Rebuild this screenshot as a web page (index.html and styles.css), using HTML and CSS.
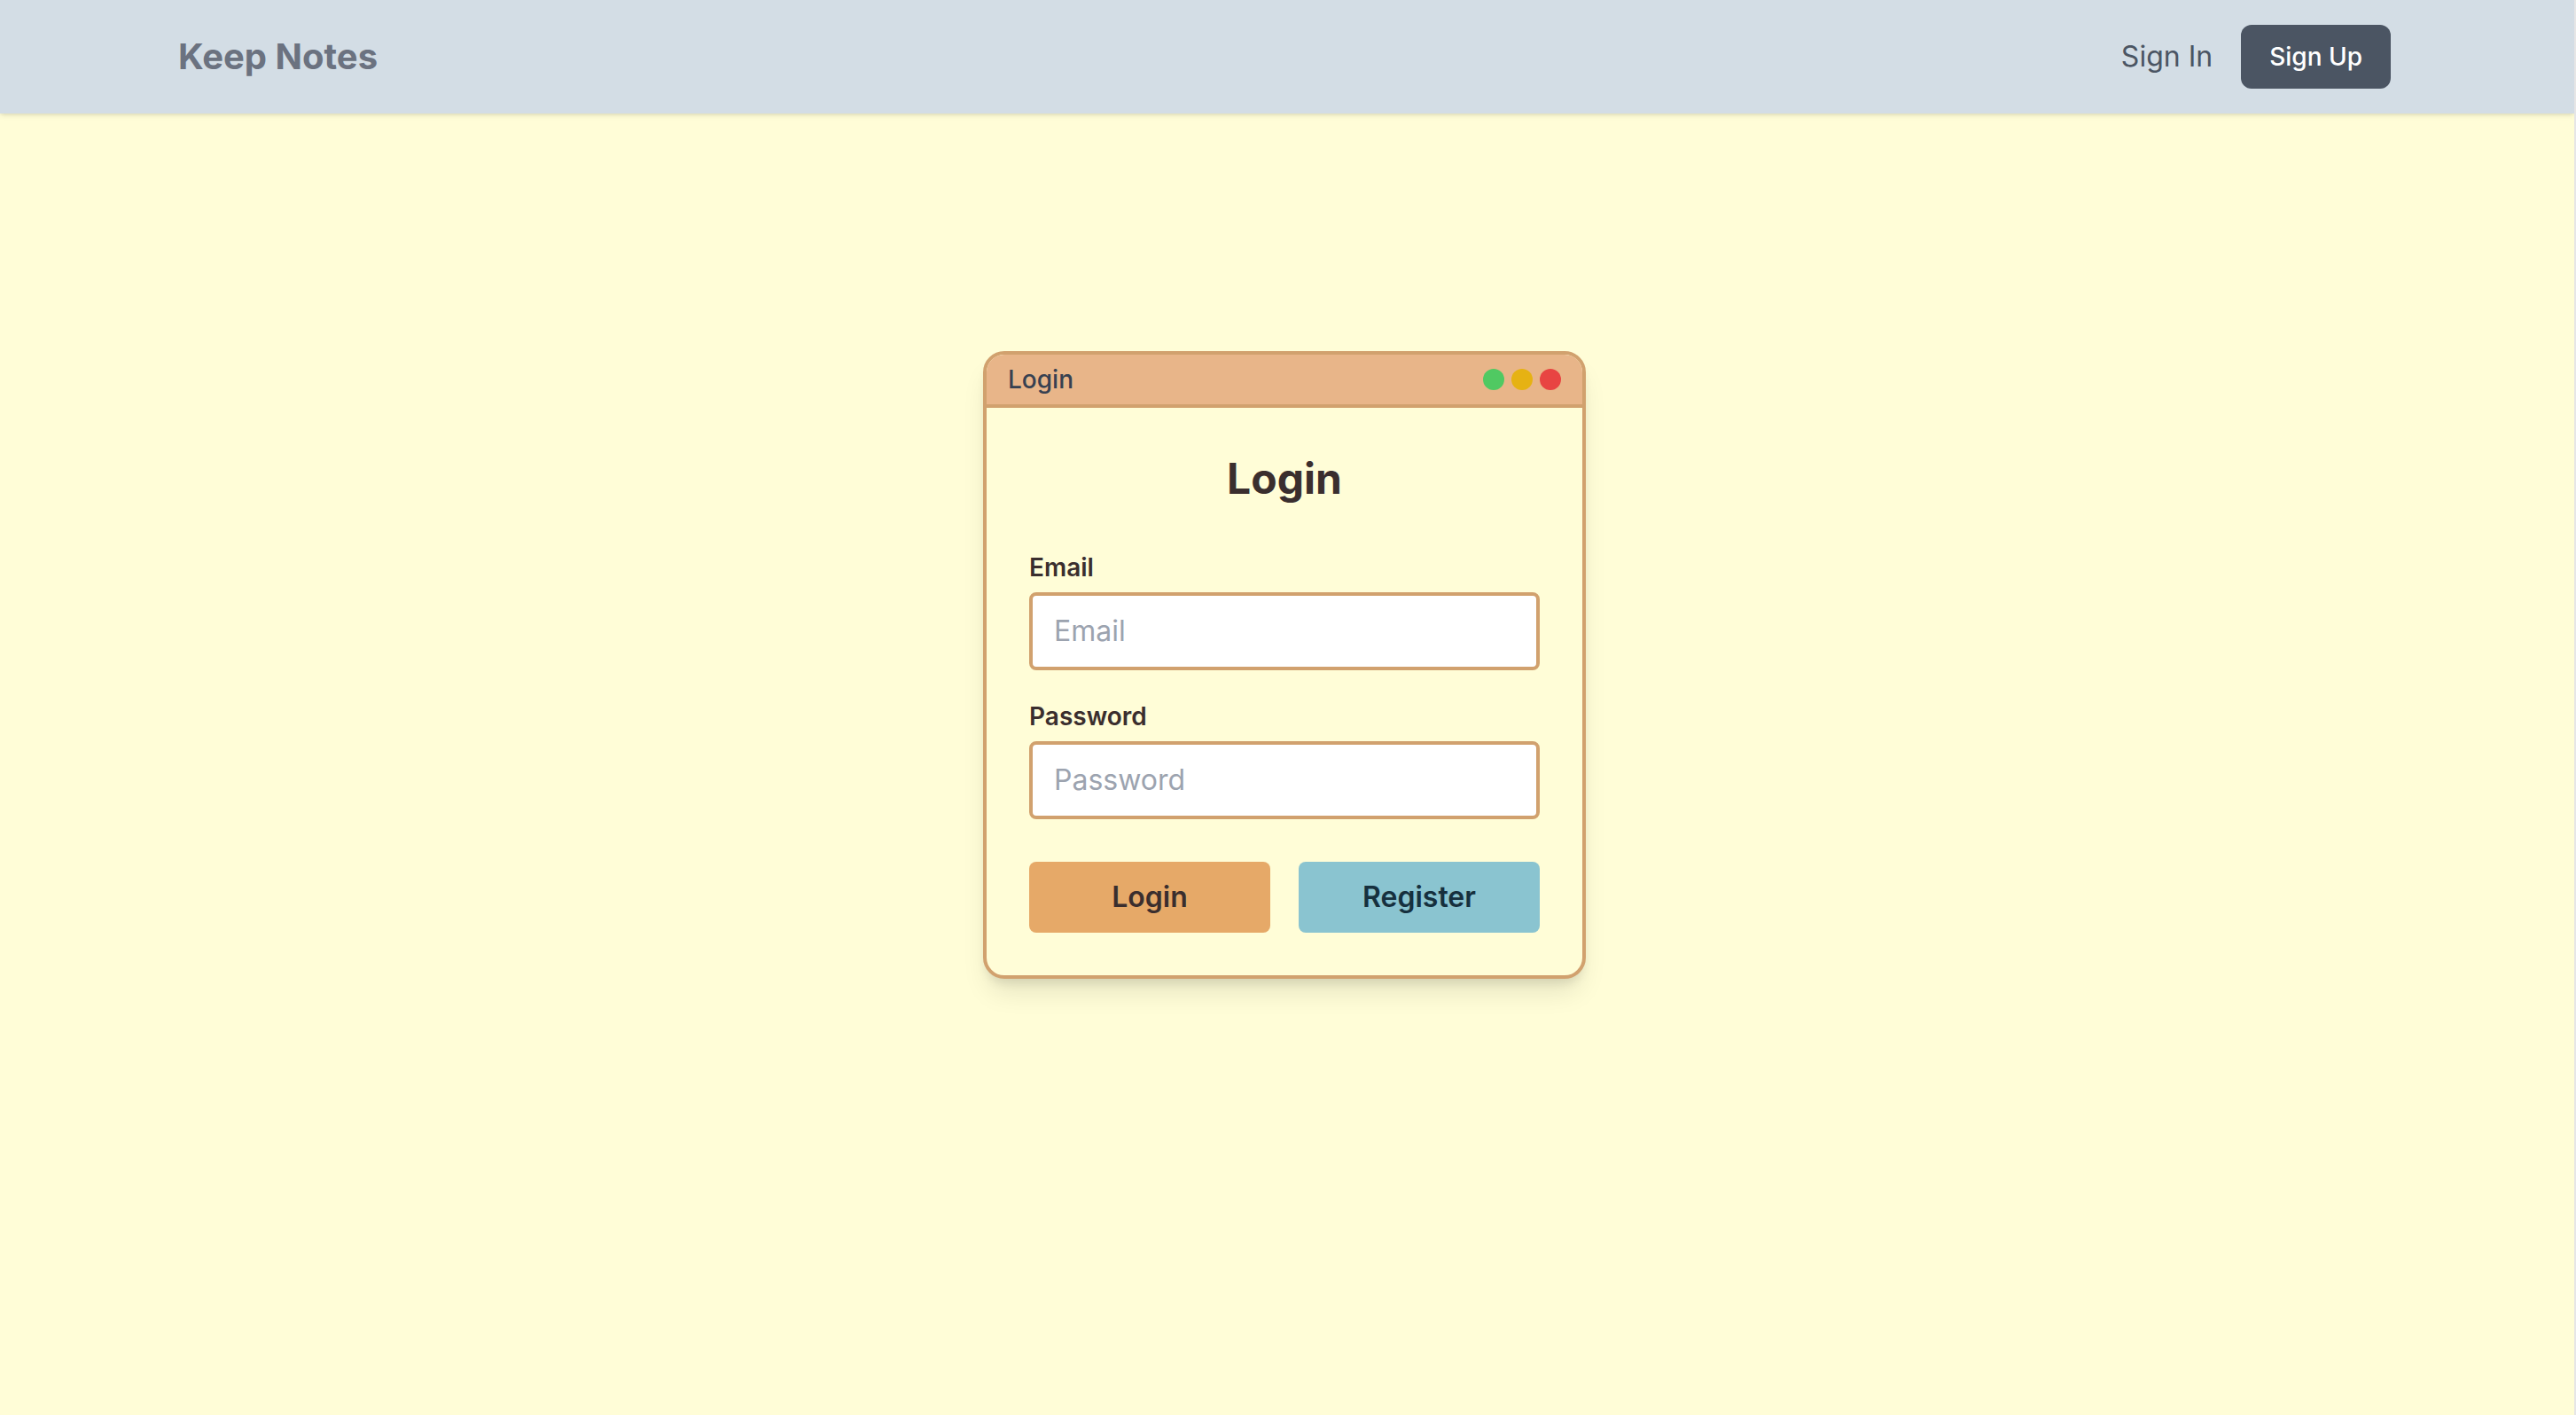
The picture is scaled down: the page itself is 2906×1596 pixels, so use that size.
FILE: index.html
```html
<!DOCTYPE html>
<html lang="en">
<head>
  <meta charset="utf-8">
  <meta name="viewport" content="width=device-width, initial-scale=1">
  <title>Keep Notes</title>
  <link rel="stylesheet" href="styles.css">
</head>
<body>
  <header class="site-header">
    <div class="header-inner">
      <a class="brand" href="#">Keep Notes</a>
      <nav class="nav">
        <a class="nav-link" href="#signin">Sign In</a>
        <a class="nav-button" href="#signup">Sign Up</a>
      </nav>
    </div>
  </header>
  <main class="page">
    <section class="window">
      <div class="titlebar">
        <span class="titlebar-text">Login</span>
        <div class="dots">
          <span class="dot dot-green"></span>
          <span class="dot dot-yellow"></span>
          <span class="dot dot-red"></span>
        </div>
      </div>
      <form class="form">
        <h1 class="heading">Login</h1>
        <div class="field">
          <label class="label" for="email">Email</label>
          <input class="input" id="email" type="email" placeholder="Email">
        </div>
        <div class="field">
          <label class="label" for="password">Password</label>
          <input class="input" id="password" type="password" placeholder="Password">
        </div>
        <div class="actions">
          <button class="button button-login" type="submit">Login</button>
          <button class="button button-register" type="button">Register</button>
        </div>
      </form>
    </section>
  </main>
</body>
</html>
```
FILE: styles.css
```css
* {
  box-sizing: border-box;
}

body {
  display: flex;
  flex-direction: column;
  min-height: 100vh;
  margin: 0;
  border-right: 2px solid #e6e6e6;
  background: #fffdd7;
  color: #3a2e2e;
  font-family: Inter, "Liberation Sans", sans-serif;
}

a {
  text-decoration: none;
}

.site-header {
  padding-right: 6px;
  background: #d3dde5;
  box-shadow: 0 2px 6px rgba(0, 0, 0, 0.1), 0 2px 4px -2px rgba(0, 0, 0, 0.1);
}

.header-inner {
  display: flex;
  align-items: center;
  justify-content: space-between;
  max-width: 2560px;
  margin: 0 auto;
  padding: 28px 32px;
}

.brand {
  color: #6b7280;
  font-size: 40px;
  font-weight: 700;
  line-height: 56px;
}

.nav {
  display: flex;
  align-items: center;
  gap: 32px;
}

.nav-link {
  color: #4b5563;
  font-size: 32px;
  line-height: 48px;
}

.nav-button {
  padding: 16px 32px;
  border-radius: 12px;
  background: #4b5563;
  color: #fff;
  font-size: 28px;
  font-weight: 500;
  line-height: 40px;
}

.page {
  display: flex;
  flex: 1;
  align-items: flex-start;
  justify-content: center;
  padding: 268px 38px 32px 32px;
}

.window {
  width: 100%;
  max-width: 680px;
  overflow: hidden;
  border: 4px solid #d1a16e;
  border-radius: 24px;
  background: #fffdd7;
  box-shadow: 0 20px 30px -6px rgba(0, 0, 0, 0.1), 0 8px 12px -4px rgba(0, 0, 0, 0.1);
}

.titlebar {
  display: flex;
  align-items: center;
  justify-content: space-between;
  padding: 8px 24px;
  border-bottom: 4px solid #d1a16e;
  background: #e8b589;
}

.titlebar-text {
  color: #374151;
  font-size: 28px;
  font-weight: 500;
  line-height: 40px;
}

.dots {
  display: flex;
  gap: 8px;
}

.dot {
  width: 24px;
  height: 24px;
  border-radius: 50%;
}

.dot-green {
  background: #50c962;
}

.dot-yellow {
  background: #e6b213;
}

.dot-red {
  background: #e84442;
}

.form {
  padding: 48px;
}

.heading {
  margin: 0 0 48px;
  font-size: 48px;
  font-weight: 700;
  line-height: 64px;
  text-align: center;
}

.field {
  margin-bottom: 32px;
}

.label {
  display: block;
  margin-bottom: 8px;
  font-size: 28px;
  font-weight: 600;
  line-height: 40px;
}

.input {
  display: block;
  width: 100%;
  height: 88px;
  padding: 14px 24px 16px;
  border: 4px solid #d1a16e;
  border-radius: 8px;
  background: #fff;
  color: #3a2e2e;
  font-family: inherit;
  font-size: 32px;
  line-height: 48px;
}

.input::placeholder {
  color: #9ca3af;
  opacity: 1;
}

.actions {
  display: grid;
  grid-template-columns: 1fr 1fr;
  gap: 32px;
  padding-top: 16px;
}

.button {
  padding: 16px;
  border: 0;
  border-radius: 8px;
  font-family: inherit;
  font-size: 32px;
  font-weight: 600;
  line-height: 48px;
}

.button-login {
  background: #e6a968;
  color: #3a2e2e;
}

.button-register {
  background: #8ac4d0;
  color: #16303e;
}
```
